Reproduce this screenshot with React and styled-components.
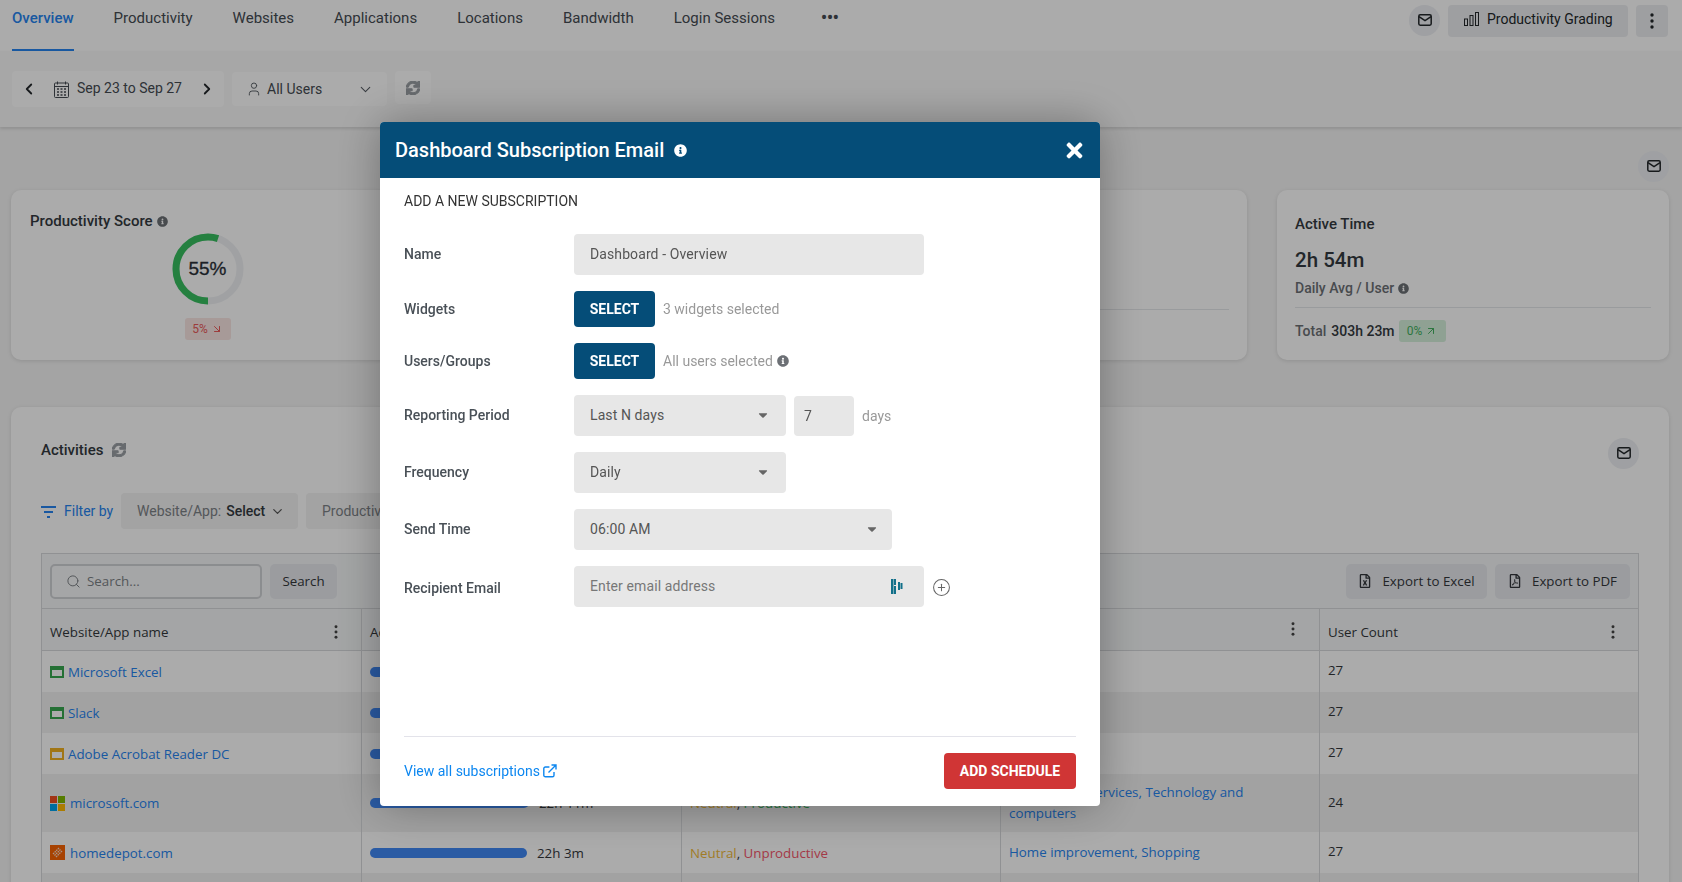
import React from "react";
import styled, { createGlobalStyle } from "styled-components";
import { ChevronLeft, ChevronRight, ChevronDown, User, Search, CirclePlus, ArrowDownRight, ArrowUpRight } from "lucide-react";
import { FaSync, FaInfoCircle, FaTimes, FaRegFileExcel, FaRegFilePdf, FaCaretDown } from "react-icons/fa";

const Global = createGlobalStyle`
  html, body { margin: 0; padding: 0; height: 882px; overflow: hidden; background: #f5f5f5; }
  * { box-sizing: border-box; }
  body { font-family: Roboto, "Liberation Sans", sans-serif; font-size: 14px; color: #343a40; }
`;

const Page = styled.div`width: 1682px; height: 882px; overflow: hidden; background: #f5f5f5;`;

const TabBar = styled.header`display: flex; height: 51px; padding: 0 14px 0 12px; background: #fff;`;
const Tabs = styled.nav`display: flex; gap: 40px;`;
const Tab = styled.div`
  height: 51px; padding-top: 8px; line-height: 20px; font-size: 15px;
  color: ${p => (p.$active ? "#2684f0" : "#454b52")};
  font-weight: ${p => (p.$active ? 500 : 400)};
  border-bottom: 2px solid ${p => (p.$active ? "#2684f0" : "transparent")};
`;
const More = styled.div`font-weight: 900; font-size: 16px; color: #454b52; padding-top: 8px; margin-left: 6px;`;
const TopActions = styled.div`display: flex; gap: 8px; margin-left: auto; padding-top: 5px; align-items: flex-start;`;
const RoundBtn = styled.div`
  width: 31px; height: 31px; border-radius: 50%; background: #edeff3; color: #23272b;
  display: flex; align-items: center; justify-content: center; flex: none;
`;
const GradeBtn = styled.div`
  width: 180px; height: 32px; border-radius: 4px; background: #eceef1; display: flex; align-items: center;
  padding-left: 16px; gap: 8px; font-size: 14px; color: #23272b; padding-bottom: 4px;
`;
const DotsBtn = styled.div`
  width: 32px; height: 32px; border-radius: 4px; background: #eceef1; display: flex; align-items: center; justify-content: center;
`;

const FilterBar = styled.div`
  display: flex; align-items: flex-start; gap: 8px; height: 76px; padding: 20px 12px 0; background: #fafafa;
  box-shadow: 0 2px 3px rgba(0,0,0,.12); position: relative;
`;
const DateGroup = styled.div`
  width: 212px; height: 36px; border-radius: 4px; background: #fff; display: flex; align-items: center;
  padding: 0 8px; color: #23272b;
`;
const DateText = styled.span`font-size: 14px; color: #454b52; margin-left: 8px; margin-right: auto; padding-bottom: 2px;`;
const CalendarWrap = styled.span`margin-left: 16px; display: flex;`;
const UserDrop = styled.div`
  width: 155px; height: 34px; margin-top: 1px; border-radius: 4px; background: #fff; display: flex; align-items: center;
  padding: 0 13px 0 14px; color: #555b62; gap: 5px;
`;
const UserText = styled.span`font-size: 14px; color: #454b52; margin-right: auto;`;
const RefreshBtn = styled.div`
  width: 36px; height: 33px; border-radius: 4px; background: #fff; display: flex; align-items: center; justify-content: center; color: #9a9fa4;
`;
const SyncIcon = styled(FaSync)`font-size: 14px; stroke: currentColor; stroke-width: 40px; color: #9a9fa4;`;

const Content = styled.main`padding: 0 13px 0 11px;`;
const MailRow = styled.div`display: flex; justify-content: flex-end; height: 63px; padding-top: 24px;`;
const CardGrid = styled.div`display: grid; grid-template-columns: repeat(4, 392px); gap: 30px;`;
const Card = styled.section`
  height: 170px; border-radius: 10px; background: #fff; padding: 22px 18px 0; box-shadow: 0 1px 4px rgba(0,0,0,.12);
`;
const ScoreCard = styled(Card)`padding: 22px 18px 0 19px;`;
const ScoreTitle = styled.div`font-weight: 500; font-size: 15px; line-height: 18px; color: #343a40; display: flex; align-items: center; gap: 4px;`;
const InfoGrey = styled(FaInfoCircle)`font-size: ${p => p.$s || 11}px; color: ${p => p.$c || "#6c7075"};`;
const Ring = styled.div`width: 72px; height: 72px; margin: 3px auto 0; position: relative;`;
const RingLabel = styled.div`
  position: absolute; inset: 0; display: flex; align-items: center; justify-content: center;
  font-family: "Liberation Sans", sans-serif; font-size: 19px; color: #2a3038; -webkit-text-stroke: .3px #2a3038;
`;
const RedBadge = styled.div`
  width: 46px; height: 22px; margin: 13px auto 0; border-radius: 3px; background: #f9e6e3; color: #ea5a5a;
  font-size: 12px; display: flex; align-items: center; justify-content: center; gap: 3px;
`;
const Divider = styled.div`height: 1px; background: #e5e7ea; margin-top: ${p => p.$top || 0}px;`;
const StatTitle = styled.div`font-weight: 500; font-size: 15px; line-height: 20px; margin-top: 2px; color: #343a40;`;
const StatValue = styled.div`font-weight: 500; font-size: 20.5px; line-height: 26px; margin-top: 13px; color: #343a40;`;
const StatSub = styled.div`font-weight: 500; font-size: 14px; line-height: 18px; margin-top: 6px; color: #6c7075; display: flex; align-items: center; gap: 4px;`;
const TotalRow = styled.div`display: flex; align-items: center; height: 22px; margin-top: 12px; font-size: 14px;`;
const TotalLabel = styled.span`font-weight: 500; color: #6c7075; margin-right: 5px;`;
const TotalValue = styled.span`font-weight: 500; color: #343a40; margin-right: 4px;`;
const GreenBadge = styled.div`
  width: 47px; height: 22px; border-radius: 3px; background: #d6f0dc; color: #43b060; font-size: 12px;
  display: flex; align-items: center; justify-content: center; gap: 3px;
`;

const Activities = styled.section`
  margin-top: 47px; height: 520px; border-radius: 10px; background: #fff; padding: 31px 30px 0; box-shadow: 0 1px 4px rgba(0,0,0,.12);
`;
const ActHead = styled.div`display: flex; align-items: center; height: 31px;`;
const ActTitle = styled.div`font-weight: 500; font-size: 15px; color: #343a40; margin-right: 9px; padding-bottom: 8px;`;
const ActSync = styled(SyncIcon)`margin-bottom: 8px;`;
const PushRight = styled.div`margin-left: auto;`;
const FilterRow = styled.div`display: flex; align-items: center; height: 36px; margin-top: 24px; gap: 8px;`;
const FilterLabel = styled.div`display: flex; align-items: center; gap: 8px; color: #2684f0; font-size: 14px; width: 72px; white-space: nowrap; flex: none;`;
const FilterSvg = styled.svg`flex: none;`;
const Chip = styled.div`
  height: 36px; width: ${p => p.$w}px; border-radius: 4px; background: #f3f3f3; color: #7d8287; font-size: 14px;
  display: flex; align-items: center; gap: 5px; padding-left: 16px;
`;
const ChipStrong = styled.strong`font-weight: 500; color: #343a40;`;

const Table = styled.div`
  margin-top: 24px; border: 1px solid #d7d9dc; border-bottom: 0; width: 1598px; font-family: "Open Sans", sans-serif; font-size: 13.33px; color: #33373b;
`;
const Toolbar = styled.div`
  display: flex; align-items: center; height: 55px; padding: 0 8px; background: #f5f7f8; border-bottom: 1px solid #d7d9dc; gap: 8px;
`;
const SearchBox = styled.div`
  width: 212px; height: 35px; border: 2px solid #d0d2d6; border-radius: 5px; display: flex; align-items: center; gap: 6px;
  padding-left: 14px; color: #7d8287; background: #f7f8f9;
`;
const ToolBtn = styled.div`
  height: 35px; width: ${p => p.$w}px; border-radius: 5px; background: #e7e9ee; display: flex; align-items: center; justify-content: center; gap: 10px;
  color: #33373b;
  margin-left: ${p => (p.$auto ? "auto" : "0")};
`;
const Row = styled.div`
  display: grid; grid-template-columns: 320px 320px 319px 319px 1fr; height: ${p => p.$h}px;
  background: ${p => (p.$head ? "#f5f7f8" : p.$alt ? "#f2f2f2" : "#fff")};
  border-bottom: ${p => (p.$head ? "1px solid #d7d9dc" : "0")};
`;
const Cell = styled.div`
  display: flex; align-items: center; padding: 0 8px; border-right: 1px solid #d7d9dc; min-width: 0; position: relative;
  &:last-child { border-right: 0; }
`;
const HeadCell = styled(Cell)`padding-top: 4px;`;
const CountCell = styled(Cell)`padding-bottom: 3px;`;
const HeadDots = styled.span`position: absolute; right: ${p => p.$r || 20}px; top: ${p => p.$t || 16}px; display: flex;`;
const AppLink = styled.span`color: #2684f0; margin-left: ${p => p.$ml || 4}px;`;
const AppSquare = styled.span`
  width: 14px; height: 12px; border: 2px solid ${p => p.$c}; border-top-width: 4px; flex: none; background: #fff;
`;
const BarTrack = styled.div`width: ${p => p.$w}px; height: 10px; border-radius: 5px; background: #3f88f5; flex: none;`;
const BarText = styled.span`margin-left: 10px;`;
const Neutral = styled.span`color: #f0b93a;`;
const Prod = styled.span`color: #38b060;`;
const Unprod = styled.span`color: #f4566a;`;
const Cats = styled.div`color: #2684f0; line-height: 21px; max-width: 260px;`;

const Overlay = styled.div`position: fixed; inset: 0; background: rgba(0,0,0,.33); padding: 122px 0 0 380px;`;
const Modal = styled.div`
  width: 720px; height: 684px; background: #fff; border-radius: 4px; overflow: hidden; display: flex; flex-direction: column;
  box-shadow: 0 0 45px rgba(0,0,0,.32); font-family: Roboto, sans-serif;
`;
const ModalHead = styled.div`
  height: 56px; flex: none; background: #054d78; color: #fff; display: flex; align-items: center; padding: 0 14px 0 15px;
`;
const ModalTitle = styled.h2`margin: 0; font-size: 20px; font-weight: 500; color: #fff; margin-right: 10px;`;
const CloseIcon = styled(FaTimes)`margin-left: auto; font-size: 23px;`;
const ModalBody = styled.div`padding: 0 24px; flex: 1; display: flex; flex-direction: column;`;
const SectionTitle = styled.div`font-size: 14px; line-height: 18px; margin-top: 14px; margin-bottom: 24px; color: #333;`;
const FormRow = styled.div`display: flex; align-items: center; height: ${p => p.$h}px; margin-bottom: ${p => p.$mb}px;`;
const Label = styled.div`width: 170px; flex: none; font-weight: 500; font-size: 14px; color: #495057; position: relative; top: ${p => p.$t || 0}px;`;
const Field = styled.div`
  width: ${p => p.$w}px; height: 41px; border-radius: 4px; background: #e7e7e7; color: #555; font-size: 14px; letter-spacing: .1px;
  display: flex; align-items: center; padding: 0 ${p => p.$pr || 16}px 1px ${p => p.$pl || 16}px; justify-content: space-between; flex: none;
`;
const SmallField = styled.div`
  width: 60px; height: 40px; margin-left: 8px; border-radius: 4px; background: #e7e7e7; color: #555; font-size: 14px;
  display: flex; align-items: center; padding-left: 10px; flex: none;
`;
const Placeholder = styled.span`color: #777;`;
const SelectBtn = styled.div`
  width: 81px; height: 36px; border-radius: 4px; background: #054d78; color: #fff; font-weight: 700; font-size: 14px;
  display: flex; align-items: center; justify-content: center; flex: none;
`;
const Hint = styled.span`color: #999; font-size: 14px; margin-left: 8px; display: flex; align-items: center; gap: 4px;`;
const Caret = styled(FaCaretDown)`font-size: 14px; color: #666;`;
const PlusBtn = styled(CirclePlus)`margin-left: 8px; color: #666; position: relative; top: 1px;`;
const Footer = styled.div`
  margin-top: auto; border-top: 1px solid #e3e3ea; height: 70px; display: flex; align-items: flex-start; justify-content: space-between; padding-top: 16px;
`;
const ViewAll = styled.a`color: #0d87f0; font-size: 14px; display: flex; align-items: center; gap: 3px; height: 36px;`;
const AddBtn = styled.div`
  width: 132px; height: 36px; border-radius: 4px; background: #d03535; color: #fff; font-weight: 700; font-size: 14px;
  display: flex; align-items: center; justify-content: center;
`;

const MailIcon = ({ s = 14 }) => (
  <svg width={s} height={s * 0.86} viewBox="0 0 14 12" fill="none" stroke="currentColor" strokeWidth="1.5">
    <rect x=".8" y=".8" width="12.4" height="10.4" rx="1.4" />
    <path d="M1 2.5 L7 6.6 L13 2.5" />
  </svg>
);
const Dots = ({ h = 16, c = "#23272b" }) => (
  <svg width="4" height={h} viewBox="0 0 4 16" fill={c}>
    <circle cx="2" cy="2" r="1.7" /><circle cx="2" cy="8" r="1.7" /><circle cx="2" cy="14" r="1.7" />
  </svg>
);
const BarsIcon = () => (
  <svg width="15" height="14" viewBox="0 0 15 14" fill="none" stroke="#23272b" strokeWidth="1">
    <rect x=".5" y="7" width="3" height="6.5" /><rect x="6" y="3.5" width="3" height="10" /><rect x="11.5" y=".5" width="3" height="13" />
  </svg>
);
const CalendarIcon = () => (
  <svg width="15" height="17" viewBox="0 0 15 17" fill="none" stroke="#454b52" strokeWidth="1">
    <rect x=".5" y="2" width="14" height="14.5" rx="1" />
    <path d="M.5 5.5h14M3.5 .5v3M11.5 .5v3" />
    <path d="M3 8h2M6.5 8h2M10 8h2M3 11h2M6.5 11h2M10 11h2M3 14h2M6.5 14h2M10 14h2" strokeWidth="1.3" />
  </svg>
);
const FilterIcon = () => (
  <FilterSvg width="15" height="13" viewBox="0 0 15 13" fill="none" stroke="#2684f0" strokeWidth="2">
    <path d="M0 2h15M3 7h9M6 12h3" />
  </FilterSvg>
);
const MsLogo = () => (
  <svg width="15" height="15" viewBox="0 0 15 15">
    <rect width="7" height="7" fill="#f25022" /><rect x="8" width="7" height="7" fill="#7fba00" />
    <rect y="8" width="7" height="7" fill="#00a4ef" /><rect x="8" y="8" width="7" height="7" fill="#ffb900" />
  </svg>
);
const DepotLogo = () => (
  <svg width="15" height="15" viewBox="0 0 15 15">
    <rect width="15" height="15" fill="#f96302" />
    <path d="M3 9 L9 3 M4.5 10.5 L10.5 4.5 M6 12 L12 6" stroke="#fff" strokeWidth="1.3" strokeDasharray="1.6 .7" opacity=".8" />
  </svg>
);
const DashIcon = () => (
  <svg width="12" height="15" viewBox="0 0 12 15" fill="#12708a">
    <rect x="0" y="0" width="2.5" height="15" /><rect x="3" y="0" width="2" height="6" /><rect x="3" y="7" width="2" height="8" />
    <rect x="7" y="3" width="2" height="8" /><rect x="9.5" y="4" width="2" height="6" />
  </svg>
);
const ExternalIcon = () => (
  <svg width="14" height="14" viewBox="0 0 14 14" fill="none" stroke="#0d87f0" strokeWidth="1.4">
    <path d="M11 8v3.2a1.6 1.6 0 0 1-1.6 1.6H2.4A1.6 1.6 0 0 1 .8 11.2V4.6A1.6 1.6 0 0 1 2.4 3h4" />
    <path d="M5.5 8.5 12.5 1.5M8.5 1h4.5v4.5" />
  </svg>
);

export default function App() {
  return (
    <Page>
      <Global />
      <TabBar>
        <Tabs>
          <Tab $active>Overview</Tab>
          <Tab>Productivity</Tab>
          <Tab>Websites</Tab>
          <Tab>Applications</Tab>
          <Tab>Locations</Tab>
          <Tab>Bandwidth</Tab>
          <Tab>Login Sessions</Tab>
          <More>•••</More>
        </Tabs>
        <TopActions>
          <RoundBtn><MailIcon /></RoundBtn>
          <GradeBtn><BarsIcon />Productivity Grading</GradeBtn>
          <DotsBtn><Dots /></DotsBtn>
        </TopActions>
      </TabBar>

      <FilterBar>
        <DateGroup>
          <ChevronLeft size={18} strokeWidth={2.4} />
          <CalendarWrap><CalendarIcon /></CalendarWrap>
          <DateText>Sep 23 to Sep 27</DateText>
          <ChevronRight size={18} strokeWidth={2.4} />
        </DateGroup>
        <UserDrop>
          <User size={16} strokeWidth={1.4} />
          <UserText>All Users</UserText>
          <ChevronDown size={17} strokeWidth={1.5} />
        </UserDrop>
        <RefreshBtn><SyncIcon /></RefreshBtn>
      </FilterBar>

      <Content>
        <MailRow><RoundBtn><MailIcon /></RoundBtn></MailRow>
        <CardGrid>
          <ScoreCard>
            <ScoreTitle>Productivity Score <InfoGrey /></ScoreTitle>
            <Ring>
              <svg width="72" height="72" viewBox="0 0 72 72">
                <circle cx="36" cy="36" r="32" fill="none" stroke="#eff1f4" strokeWidth="7" />
                <circle cx="36" cy="36" r="32" fill="none" stroke="#38bf60" strokeWidth="7"
                  strokeDasharray={`${2 * Math.PI * 32 * 0.55} ${2 * Math.PI * 32}`} transform="rotate(90 36 36)" />
              </svg>
              <RingLabel>55%</RingLabel>
            </Ring>
            <RedBadge>5% <ArrowDownRight size={12} /></RedBadge>
          </ScoreCard>
          <Card />
          <Card><Divider $top={97} /></Card>
          <Card>
            <StatTitle>Active Time</StatTitle>
            <StatValue>2h 54m</StatValue>
            <StatSub>Daily Avg / User <InfoGrey /></StatSub>
            <Divider $top={10} />
            <TotalRow>
              <TotalLabel>Total</TotalLabel>
              <TotalValue>303h 23m</TotalValue>
              <GreenBadge>0% <ArrowUpRight size={12} /></GreenBadge>
            </TotalRow>
          </Card>
        </CardGrid>

        <Activities>
          <ActHead>
            <ActTitle>Activities</ActTitle>
            <ActSync />
            <PushRight><RoundBtn><MailIcon /></RoundBtn></PushRight>
          </ActHead>
          <FilterRow>
            <FilterLabel><FilterIcon />Filter by</FilterLabel>
            <Chip $w={177}>Website/App: <ChipStrong>Select</ChipStrong><ChevronDown size={15} color="#555" /></Chip>
            <Chip $w={200}>Productivity</Chip>
          </FilterRow>
          <Table>
            <Toolbar>
              <SearchBox><Search size={15} strokeWidth={1.6} />Search...</SearchBox>
              <ToolBtn $w={67}>Search</ToolBtn>
              <ToolBtn $w={141} $auto><FaRegFileExcel size={14} />Export to Excel</ToolBtn>
              <ToolBtn $w={135}><FaRegFilePdf size={14} />Export to PDF</ToolBtn>
            </Toolbar>
            <Row $h={42} $head>
              <HeadCell>Website/App name<HeadDots $r={23}><Dots h={14} c="#444" /></HeadDots></HeadCell>
              <HeadCell>Active Time</HeadCell>
              <HeadCell>Productivity</HeadCell>
              <HeadCell>Category<HeadDots $r={24} $t={13}><Dots h={14} c="#444" /></HeadDots></HeadCell>
              <HeadCell>User Count<HeadDots $r={23}><Dots h={14} c="#444" /></HeadDots></HeadCell>
            </Row>
            <Row $h={41}>
              <Cell><AppSquare $c="#38a850" /><AppLink>Microsoft Excel</AppLink></Cell>
              <Cell><BarTrack $w={157} /><BarText>24h 8m</BarText></Cell>
              <Cell><Prod>Productive</Prod></Cell>
              <Cell><Cats>Spreadsheets</Cats></Cell>
              <CountCell>27</CountCell>
            </Row>
            <Row $h={41} $alt>
              <Cell><AppSquare $c="#38a850" /><AppLink>Slack</AppLink></Cell>
              <Cell><BarTrack $w={157} /><BarText>23h 50m</BarText></Cell>
              <Cell><Prod>Productive</Prod></Cell>
              <Cell><Cats>Messaging</Cats></Cell>
              <CountCell>27</CountCell>
            </Row>
            <Row $h={41}>
              <Cell><AppSquare $c="#f0b020" /><AppLink>Adobe Acrobat Reader DC</AppLink></Cell>
              <Cell><BarTrack $w={157} /><BarText>23h 2m</BarText></Cell>
              <Cell><Neutral>Neutral</Neutral></Cell>
              <Cell><Cats>Documents</Cats></Cell>
              <CountCell>27</CountCell>
            </Row>
            <Row $h={58} $alt>
              <Cell><MsLogo /><AppLink $ml={5}>microsoft.com</AppLink></Cell>
              <Cell><BarTrack $w={159} /><BarText>22h 11m</BarText></Cell>
              <Cell><span><Neutral>Neutral</Neutral>, <Prod>Productive</Prod></span></Cell>
              <Cell><Cats>Professional services, Technology and computers</Cats></Cell>
              <CountCell>24</CountCell>
            </Row>
            <Row $h={41}>
              <Cell><DepotLogo /><AppLink $ml={5}>homedepot.com</AppLink></Cell>
              <Cell><BarTrack $w={157} /><BarText>22h 3m</BarText></Cell>
              <Cell><span><Neutral>Neutral</Neutral>, <Unprod>Unproductive</Unprod></span></Cell>
              <Cell><Cats>Home improvement, Shopping</Cats></Cell>
              <CountCell>27</CountCell>
            </Row>
            <Row $h={41} $alt><Cell /><Cell /><Cell /><Cell /><Cell /></Row>
          </Table>
        </Activities>
      </Content>

      <Overlay>
        <Modal>
          <ModalHead>
            <ModalTitle>Dashboard Subscription Email</ModalTitle>
            <FaInfoCircle size={13} />
            <CloseIcon />
          </ModalHead>
          <ModalBody>
            <SectionTitle>ADD A NEW SUBSCRIPTION</SectionTitle>
            <FormRow $h={41} $mb={16}><Label $t={-1}>Name</Label><Field $w={350}>Dashboard - Overview</Field></FormRow>
            <FormRow $h={36} $mb={16}><Label>Widgets</Label><SelectBtn>SELECT</SelectBtn><Hint>3 widgets selected</Hint></FormRow>
            <FormRow $h={36} $mb={16}><Label>Users/Groups</Label><SelectBtn>SELECT</SelectBtn><Hint>All users selected <InfoGrey $s={12} /></Hint></FormRow>
            <FormRow $h={41} $mb={16}>
              <Label $t={-1}>Reporting Period</Label>
              <Field $w={212}>Last N days<Caret /></Field>
              <SmallField>7</SmallField>
              <Hint>days</Hint>
            </FormRow>
            <FormRow $h={41} $mb={16}><Label $t={-1}>Frequency</Label><Field $w={212}>Daily<Caret /></Field></FormRow>
            <FormRow $h={41} $mb={16}><Label $t={-1}>Send Time</Label><Field $w={318} $pr={13}>06:00 AM<Caret /></Field></FormRow>
            <FormRow $h={41} $mb={0}>
              <Label $t={1}>Recipient Email</Label>
              <Field $w={350} $pr={21}><Placeholder>Enter email address</Placeholder><DashIcon /></Field>
              <PlusBtn size={19} strokeWidth={1.3} />
            </FormRow>
            <Footer>
              <ViewAll>View all subscriptions <ExternalIcon /></ViewAll>
              <AddBtn>ADD SCHEDULE</AddBtn>
            </Footer>
          </ModalBody>
        </Modal>
      </Overlay>
    </Page>
  );
}
